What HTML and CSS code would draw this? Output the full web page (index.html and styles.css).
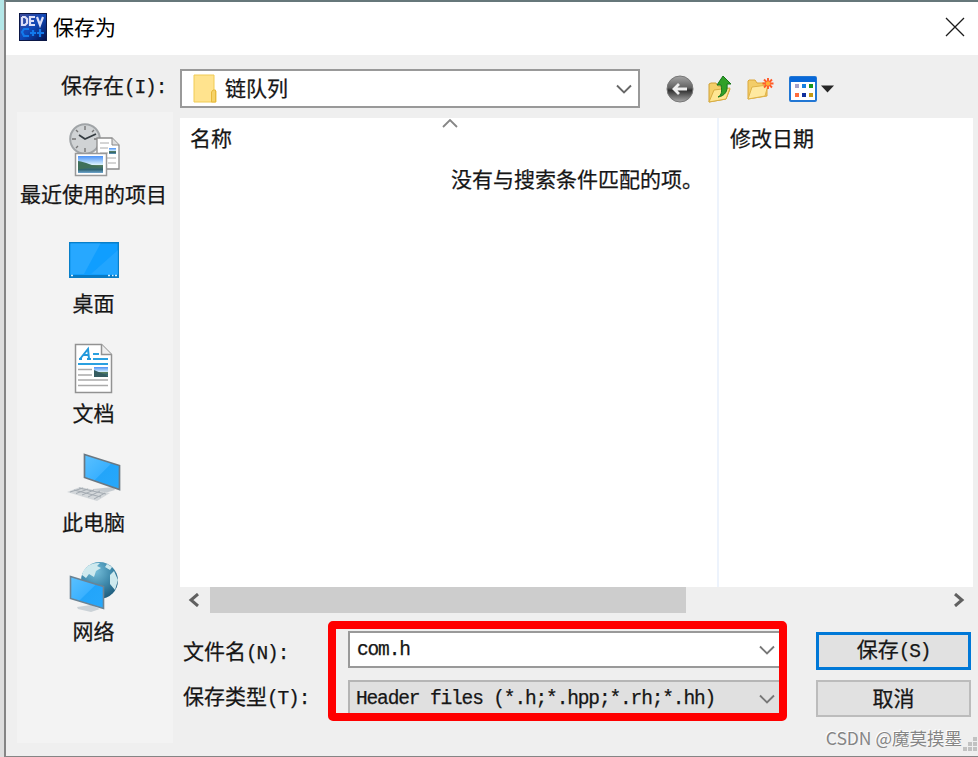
FILE: index.html
```html
<!DOCTYPE html>
<html lang="zh-CN">
<head>
<meta charset="utf-8">
<title>保存为</title>
<link rel="stylesheet" href="styles.css">
</head>
<body>
<div class="dialog">
  <header class="titlebar">
    <svg class="app-icon" width="28" height="28" viewBox="0 0 28 28">
      <defs><linearGradient id="dev" x1="0" y1="0" x2="1" y2="1"><stop offset="0" stop-color="#3c4a98"/><stop offset=".5" stop-color="#1048b8"/><stop offset="1" stop-color="#02104c"/></linearGradient></defs>
      <rect width="28" height="28" fill="#0b1746"/><rect x="1" y="1" width="26" height="26" fill="url(#dev)"/>
      <path d="M3 4v8h3l2-2V6L6 4H3M16 4h-5v8h5M11 8h4M18 4l3 8 3-8" fill="none" stroke="#dcdff8" stroke-width="2.2"/>
      <path d="M10 16H5l-2 3 2 4h5M11 20h6M14 17v6M18 20h7M21 16v8" fill="none" stroke="#1279ec" stroke-width="2.2"/>
    </svg>
    <span class="title">保存为</span>
    <svg class="close" width="20" height="20" viewBox="0 0 20 20"><path d="M1 1l18 18M19 1L1 19" stroke="#1c1c1c" stroke-width="1.3"/></svg>
  </header>

  <div class="toolbar">
    <label class="look-in">保存在<span class="mono">(I):</span></label>
    <div class="combo location">
      <svg width="24" height="30" viewBox="0 0 24 30"><path d="M1 1h20v16h2v11H1z" fill="#ffe38e" stroke="#f0cb55"/><path d="M18.500 28V18l1.500-2h2.500v12z" fill="#f6d368" stroke="#e7b93c"/></svg>
      <span class="location-name">链队列</span>
      <svg class="chevron" width="16" height="10" viewBox="0 0 16 10"><path d="M1 1.500l7 7 7-7" fill="none" stroke="#686868" stroke-width="1.900"/></svg>
    </div>
    <div class="tools">
      <svg width="28" height="28" viewBox="0 0 28 28">
        <defs><linearGradient id="bk" x1="0" y1="0" x2="0" y2="1"><stop offset="0" stop-color="#a5a5a5"/><stop offset=".45" stop-color="#626262"/><stop offset=".55" stop-color="#303030"/><stop offset="1" stop-color="#aaa"/></linearGradient></defs>
        <circle cx="14" cy="14" r="13" fill="url(#bk)" stroke="#777"/><path d="M21 14H8M13 9l-5 5 5 5" fill="none" stroke="#eee" stroke-width="2.800"/>
      </svg>
      <svg width="26" height="30" viewBox="0 0 26 30">
        <path d="M2 28V10l2-1h5l2 3h7v4l5-1-4 10z" fill="#f4cf68" stroke="#cfa037"/><path d="M2 28l5-12 16-2-4 11z" fill="#ffe692" stroke="#d8ad42"/>
        <path d="M11 23c4-2 4-6 3-12H10l6-9 8 8h-4c1 7-2 12-9 13z" fill="#30a027" stroke="#16761b"/>
      </svg>
      <svg width="28" height="26" viewBox="0 0 28 26">
        <path d="M2 23V5l1-1h6l2 3h10v13z" fill="#f3cd68" stroke="#dba73a"/><path d="M2 23L6 11l16-2-3 11z" fill="#ffe9a0" stroke="#dfb348"/>
        <path d="M22 2v11M16.500 7.500h11M18 3.500l8 8M26 3.500l-8 8" stroke="#ff5a28" stroke-width="1.900"/><circle cx="22" cy="7.500" r="2.200" fill="#ffae35"/>
      </svg>
      <svg width="28" height="26" viewBox="0 0 28 26">
        <rect x="1" y="1" width="26" height="24" rx="1" fill="#fff" stroke="#2277d4" stroke-width="2"/><path d="M1 1h26v5H1z" fill="#0868d8"/>
        <path fill="#a3a0c8" d="M6 8h4v4H6z"/><path fill="#1680e0" d="M13 8h4v4h-4z"/><path fill="#17961c" d="M20 8h4v4h-4z"/><path fill="#ff6c3b" d="M6 17h4v4H6z"/><path fill="#102f9c" d="M13 17h4v4h-4z"/><path fill="#c59a13" d="M20 17h4v4h-4z"/>
      </svg>
      <svg class="view-arrow" width="14" height="8" viewBox="0 0 14 8"><path d="M0 .5h13L6.500 7.500z" fill="#262626"/></svg>
    </div>
  </div>

  <div class="content">
    <nav class="places">
      <div class="place">
        <svg width="52" height="54" viewBox="0 0 52 54">
          <defs><linearGradient id="sky" x1="0" y1="0" x2="0" y2="1"><stop offset="0" stop-color="#4b91f5"/><stop offset=".5" stop-color="#d9f1ff"/><stop offset=".55" stop-color="#587f60"/><stop offset=".8" stop-color="#2f6473"/><stop offset="1" stop-color="#70a6cf"/></linearGradient></defs>
          <circle cx="17" cy="16" r="14.800" fill="#d0d3d5" stroke="#a0a4a7" stroke-width="2"/><path d="M17 3v4M17 25v4M4 16h4M26 16h4M8 7l2 2M26 7l-2 2M8 25l2-2" stroke="#777" stroke-width="1.400"/><path d="M11 12l6 4 11-5" fill="none" stroke="#353c41" stroke-width="1.800"/>
          <path d="M29 15h15l7 7v24H29z" fill="#fff" stroke="#8c8c8c" stroke-width="1.300"/><path d="M44 15v7h7" fill="#ddd" stroke="#888"/><path d="M32 20h9M32 25h8M32 30h8M32 35h16M40 40h8" stroke="#aaa"/><path d="M41 25h7v6h-7z" fill="url(#sky)"/>
          <path d="M7.500 30.500h31v22h-31z" fill="#fff" stroke="#999" stroke-width="1.500"/><path d="M10 33h25v17H10z" fill="url(#sky)"/><path d="M10 38c8 1 13 5 25 6-10 1-17 0-25 3z" fill="#3f705a"/>
        </svg>
        <span>最近使用的项目</span>
      </div>
      <div class="place">
        <svg width="50" height="54" viewBox="0 0 50 54">
          <path d="M.7 10.700h48.600v34.600H.7z" fill="#109eff" stroke="#087fc9" stroke-width="1.400"/><path d="M1.500 11.500h30L15 42H1.500z" fill="#27a8ff"/><path d="M49 18v24H22z" fill="#38aeff" opacity=".45"/><path d="M1 43h48v2.500H1z" fill="#087ac4"/><path d="M2 43.500h2M39 43.500h2M43 43.500h1.500M46 43.500h2" stroke="#d8f2ff" stroke-width="1.500"/>
        </svg>
        <span>桌面</span>
      </div>
      <div class="place">
        <svg width="50" height="54" viewBox="0 0 50 54">
          <path d="M6.500 2.500h26l10 10v38h-36z" fill="#fff" stroke="#929292" stroke-width="1.500"/><path d="M32.500 2.500v10h10" fill="#eee" stroke="#929292" stroke-width="1.500"/>
          <path d="M11 17l8-10 1 10M14 13h6M10 17h3M18 17h4" fill="none" stroke="#2399dc" stroke-width="2"/><path d="M24 12h6M24 17h15M9 22h30" stroke="#2aa0e0" stroke-width="2"/><path d="M9 27.500h14M9 33h14M9 38h30M9 43.500h30" stroke="#aaa" stroke-width="1.300"/><path d="M25 25h14v10H25z" fill="url(#sky)"/><path d="M25 28l14 6v1H25z" fill="#355c60"/>
        </svg>
        <span>文档</span>
      </div>
      <div class="place">
        <svg width="54" height="54" viewBox="0 0 54 54">
          <defs><linearGradient id="scr" x1="0" y1="0" x2="1" y2="1"><stop offset="0" stop-color="#5bc1ff"/><stop offset=".5" stop-color="#3bb1ff"/><stop offset=".52" stop-color="#23a5fa"/><stop offset="1" stop-color="#27a8fb"/></linearGradient></defs>
          <path d="M26 38l20-2 2 3-10 3-12-2z" fill="#c5cbd0"/><path d="M17.500 3.500l35 11v24l-35-12z" fill="url(#scr)" stroke="#6b7882" stroke-width="1.700"/>
          <path d="M0 41l13-5 30 6-13 8z" fill="#d3d7da"/><path d="M3 41l13-4M9 42.500l12-4.500M15 44l12-5M21 46l12-6M27 48l11-6M7 39l27 7M12 37l27 6" stroke="#a4abb2" stroke-width="1"/>
        </svg>
        <span>此电脑</span>
      </div>
      <div class="place">
        <svg width="50" height="54" viewBox="0 0 50 54">
          <defs><radialGradient id="earth" cx=".4" cy=".25" r=".8"><stop offset="0" stop-color="#75bdd9"/><stop offset=".5" stop-color="#418cae"/><stop offset="1" stop-color="#1b5878"/></radialGradient></defs>
          <circle cx="30.500" cy="20.500" r="18.500" fill="url(#earth)"/><path d="M13 15c1-7 9-13 18-12l-3 3 4 2-5 3-2 6-5-3-3 4zM38 4l5 3-2 3-5-3zM41 15l4-4 4 9-3 10-5-6z" fill="#cee9ee"/>
          <path d="M8 47l14-2 9 4-9 3-13-3z" fill="#cbd2d7"/><path d="M1.500 16.500l33 10v22l-33-10z" fill="url(#scr)" stroke="#6b8394" stroke-width="1.600"/>
        </svg>
        <span>网络</span>
      </div>
    </nav>

    <main class="main">
      <section class="list">
        <div class="column column-name">名称
          <svg class="sort" width="16" height="9" viewBox="0 0 16 9"><path d="M1 8l7-7 7 7" fill="none" stroke="#868686" stroke-width="1.800"/></svg>
        </div>
        <div class="column column-date">修改日期</div>
        <p class="empty">没有与搜索条件匹配的项。</p>
      </section>
      <div class="scrollbar">
        <svg class="scroll-left" width="12" height="14" viewBox="0 0 12 14"><path d="M10 1L3 7l7 6" fill="none" stroke="#606060" stroke-width="3"/></svg>
        <div class="thumb"></div>
        <svg class="scroll-right" width="12" height="14" viewBox="0 0 12 14"><path d="M2 1l7 6-7 6" fill="none" stroke="#606060" stroke-width="3"/></svg>
      </div>
      <div class="form">
        <label class="name-label">文件名<span class="mono">(N):</span></label>
        <div class="combo field"><span class="mono">com.h</span>
          <svg class="chevron" width="16" height="10" viewBox="0 0 16 10"><path d="M1 1.500l7 7 7-7" fill="none" stroke="#777" stroke-width="1.900"/></svg>
        </div>
        <div class="button primary"><span>保存<span class="mono">(S)</span></span></div>
        <label class="type-label">保存类型<span class="mono">(T):</span></label>
        <div class="combo field type"><span class="mono">Header files (*.h;*.hpp;*.rh;*.hh)</span>
          <svg class="chevron" width="16" height="10" viewBox="0 0 16 10"><path d="M1 1.500l7 7 7-7" fill="none" stroke="#777" stroke-width="1.900"/></svg>
        </div>
        <div class="button">取消</div>
        <div class="highlight"></div>
      </div>
      <footer class="watermark">CSDN @魔莫摸墨
        <svg class="grip" width="16" height="16" viewBox="0 0 16 16"><path d="M11 1h4v4h-4zM6 6h4v4H6zM11 6h4v4h-4zM1 11h4v4H1zM6 11h4v4H6zM11 11h4v4h-4z" fill="#c2c2c2"/></svg>
      </footer>
    </main>
  </div>
</div>
</body>
</html>
```
FILE: styles.css
```css
* { box-sizing: border-box; }
body {
  margin: 0;
  height: 757px;
  overflow: hidden;
  padding-left: 4px;
  background: linear-gradient(#b4e7e8 0 30px, #dedede 30px);
  font: 21px/30px "Noto Sans CJK SC", sans-serif;
  color: #161616;
  -webkit-text-stroke: 0.25px;
}
svg { display: block; flex: none; }
.dialog {
  height: 757px;
  border: solid #858585;
  border-width: 2px 0 1px 2px;
  border-top-color: #66777a;
  background: #efefef;
  display: flex;
  flex-direction: column;
}
.titlebar {
  height: 53px;
  flex: none;
  background: #fff;
  display: flex;
  align-items: center;
  padding: 0 13px 3px 13px;
}
.title { margin: -2px 0 0 6px; color: #000; -webkit-text-stroke: 0; }
.close { margin-left: auto; }
.mono {
  font-family: "Liberation Mono", monospace;
  font-size: 19.5px;
  letter-spacing: -1.14px;
  white-space: pre;
}
.toolbar { height: 63px; flex: none; display: flex; align-items: flex-start; }
.look-in { width: 174px; padding: 14px 0 0 55px; white-space: nowrap; }
.combo {
  display: flex;
  align-items: center;
  border: 2px solid #999;
  background: #fff;
}
.location { width: 460px; height: 39px; margin-top: 14px; padding: 0 6px 0 11px; }
.location-name { margin: -3px 0 0 8px; }
.chevron { margin-left: auto; }
.tools { display: flex; align-items: center; height: 39px; margin: 14px 0 0 26px; }
.tools svg + svg { margin-left: 13px; }
.tools svg:nth-child(4) { margin-left: 15px; }
.tools .view-arrow { margin-left: 4px; }
.content { flex: 1; min-height: 0; display: flex; }
.places {
  width: 156px;
  height: 631px;
  margin: -6px 7px 0 11px;
  padding: 11px 3px 0 0;
  background: #f3f3f3;
  flex: none;
}
.place {
  height: 109.3px;
  display: flex;
  flex-direction: column;
  align-items: center;
  white-space: nowrap;
}
.place span { margin-top: 1px; }
.main { width: 798px; flex: none; }
.list {
  width: 793px;
  height: 469px;
  background: #fff;
  display: grid;
  grid-template-columns: 537px 256px;
  grid-template-rows: 469px;
}
.column { grid-row: 1; position: relative; padding: 4px 0 0 10px; }
.column-name { grid-column: 1; }
.column-date {
  grid-column: 2;
  border-left: 2px solid #edf3fc;
  padding-left: 11px;
}
.sort { position: absolute; left: 262px; top: 1px; }
.empty { grid-column: 1; grid-row: 1; margin: 45px 0 0 271px; white-space: nowrap; z-index: 1; }
.scrollbar { height: 26px; width: 793px; display: flex; align-items: center; padding: 0 8px; }
.thumb { width: 476px; height: 26px; margin-left: 10px; background: #cdcdcd; }
.scroll-right { margin-left: auto; }
.form {
  position: relative;
  display: grid;
  grid-template-columns: 168px 434px 155px;
  grid-template-rows: 37px 37px;
  row-gap: 12px;
  padding-top: 18px;
  height: 106px;
}
.form label { padding-left: 3px; white-space: nowrap; }
.form .name-label { padding-top: 4px; }
.form .type-label { padding-top: 0; }
.field { padding: 0 5px 0 7px; }
.type { background: #e0e0e0; border-color: #b5b5b5; padding-left: 6px; }
.button {
  width: 155px;
  margin-left: 34px;
  border: 2px solid #bcbcbc;
  background: #e1e1e1;
  display: flex;
  align-items: center;
  justify-content: center;
  padding-bottom: 3px;
}
.primary { border: 3px solid #0078d7; height: 38px; margin-top: 1px; }
.highlight {
  position: absolute;
  left: 148px;
  top: 8px;
  width: 459px;
  height: 100px;
  border: 8px solid #f00;
  border-radius: 5px;
}
.watermark {
  display: flex;
  justify-content: flex-end;
  height: 36px;
  padding: 6px 0 0;
  font-size: 17.5px;
  line-height: 26px;
  color: #858585;
  text-shadow: -1px -1px 0 #fff;
  -webkit-text-stroke: 0;
}
.grip { margin-top: 11px; }
```
